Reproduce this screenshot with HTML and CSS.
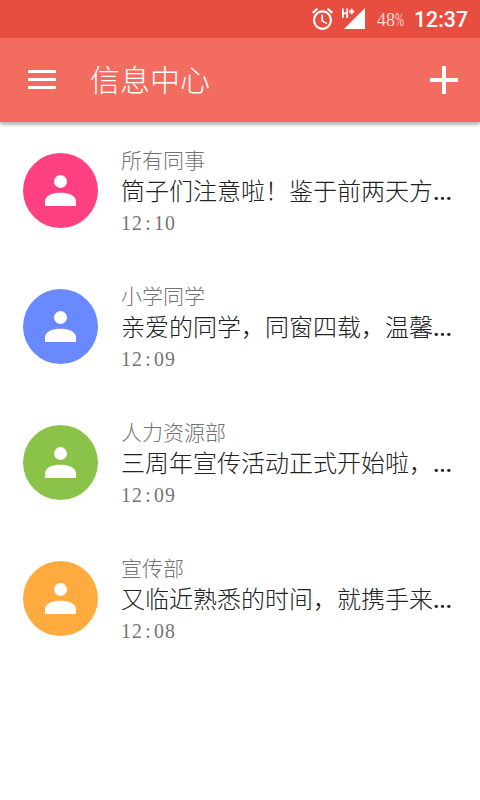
FILE: index.html
```html
<!DOCTYPE html>
<html lang="zh-CN">
<head>
<meta charset="utf-8">
<title>信息中心</title>
<link rel="stylesheet" href="styles.css">
</head>
<body>
<svg width="0" height="0" class="defs">
  <symbol id="person" viewBox="0 0 31 31"><circle cx="15.5" cy="6.5" r="6.5"/><path d="M0 31V25.5C1 20 8 17.7 15.5 17.7S30 20 31 25.5V31Z"/></symbol>
</svg>
<div class="status">
  <svg class="alarm" width="21" height="22" viewBox="2 2 20 20" preserveAspectRatio="none"><path fill="#fff" d="M22 5.72l-4.6-3.86-1.29 1.53 4.6 3.86L22 5.72zM7.88 3.39L6.6 1.86 2 5.71l1.29 1.53 4.59-3.85zM12.5 8H11v6l4.75 2.85.75-1.23-4-2.37V8zM12 4c-4.97 0-9 4.03-9 9s4.02 9 9 9c4.97 0 9-4.03 9-9s-4.03-9-9-9zm0 16c-3.87 0-7-3.13-7-7s3.13-7 7-7 7 3.13 7 7-3.13 7-7 7z"/></svg>
  <svg class="signal" width="24" height="22" viewBox="0 0 24 22"><path fill="#fff" d="M23 0V21H2Z"/><path fill="none" stroke="#fff" stroke-width="1.8" d="M.9 .5V10M5.2 .5V10M.9 5.3H5.2M7 3.5H12.2M9.6 .8V6.2"/></svg>
  <span class="battery">48<span class="percent">%</span></span>
  <span class="clock">12:37</span>
</div>
<header class="bar">
  <svg class="menu" width="28" height="19" viewBox="0 0 28 19"><path fill="#fff" d="M0 0H28V3H0ZM0 8H28V11H0ZM0 16H28V19H0Z"/></svg>
  <h1 class="title">信息中心</h1>
  <svg class="plus" width="28" height="28" viewBox="0 0 28 28"><path fill="#fff" d="M12 0H16V12H28V16H16V28H12V16H0V12H12Z"/></svg>
</header>
<main class="list">
  <article class="item">
    <div class="avatar pink"><svg class="person"><use href="#person"/></svg></div>
    <div class="text">
      <div class="name">所有同事</div>
      <div class="message">筒子们注意啦！鉴于前两天方<span class="dots">...</span></div>
      <div class="time">12<span class="colon">:</span>10</div>
    </div>
  </article>
  <article class="item">
    <div class="avatar blue"><svg class="person"><use href="#person"/></svg></div>
    <div class="text">
      <div class="name">小学同学</div>
      <div class="message">亲爱的同学，同窗四载，温馨<span class="dots">...</span></div>
      <div class="time">12<span class="colon">:</span>09</div>
    </div>
  </article>
  <article class="item">
    <div class="avatar green"><svg class="person"><use href="#person"/></svg></div>
    <div class="text">
      <div class="name">人力资源部</div>
      <div class="message">三周年宣传活动正式开始啦，<span class="dots">...</span></div>
      <div class="time">12<span class="colon">:</span>09</div>
    </div>
  </article>
  <article class="item">
    <div class="avatar orange"><svg class="person"><use href="#person"/></svg></div>
    <div class="text">
      <div class="name">宣传部</div>
      <div class="message">又临近熟悉的时间，就携手来<span class="dots">...</span></div>
      <div class="time">12<span class="colon">:</span>08</div>
    </div>
  </article>
</main>
</body>
</html>
```
FILE: styles.css
```css
* { box-sizing: border-box; }
body {
  margin: 0;
  height: 800px;
  overflow: hidden;
  background: #fff;
  font-family: "Noto Sans CJK SC", sans-serif;
  font-weight: 300;
}
svg { display: block; flex: none; }
.defs { display: none; }
.status {
  display: flex;
  height: 38px;
  padding: 0 12px 0 312px;
  background: #e84e40;
  color: #fff;
}
.alarm { margin-top: 8px; }
.signal { margin: 8px 0 0 9px; }
.battery {
  width: 28px;
  margin-left: 11px;
  color: #fbdcd9;
  font: 18px/40px "Liberation Serif", serif;
  white-space: nowrap;
}
.percent {
  display: inline-block;
  width: 9px;
  transform: scaleX(.6);
  transform-origin: left;
}
.clock {
  margin-left: auto;
  font: 500 21.3px/40px Roboto, sans-serif;
}
.bar {
  display: flex;
  align-items: center;
  height: 84px;
  padding: 0 22px 0 28px;
  background: #f36c60;
  box-shadow: 0 3px 3px rgba(0, 0, 0, .28);
  color: #fff;
}
.menu { margin-top: -1px; }
.title {
  margin: -4px auto 0 34px;
  font-size: 30px;
  line-height: 40px;
  font-weight: 300;
}
.list { padding-top: 24px; }
.item {
  display: flex;
  height: 136px;
  padding-left: 23px;
}
.avatar {
  display: flex;
  align-items: center;
  justify-content: center;
  width: 75px;
  height: 75px;
  margin-top: 7px;
  border-radius: 50%;
}
.person { width: 31px; height: 31px; fill: #fff; }
.pink { background: #ff4081; }
.blue { background: #6889ff; }
.green { background: #8bc34a; }
.orange { background: #ffab40; }
.text { margin-left: 23px; white-space: nowrap; }
.name { font-size: 21px; line-height: 26px; color: #737373; }
.message { font-size: 24px; line-height: 36px; color: #212121; }
.dots { font: 500 24px/1 Roboto, sans-serif; letter-spacing: -.4px; }
.time {
  font: 22px/30px "Liberation Serif", serif;
  letter-spacing: 1.2px;
  color: #737373;
  transform: scaleX(.9);
  transform-origin: left;
}
.colon { display: inline-block; width: 12.2px; text-align: center; }
```
